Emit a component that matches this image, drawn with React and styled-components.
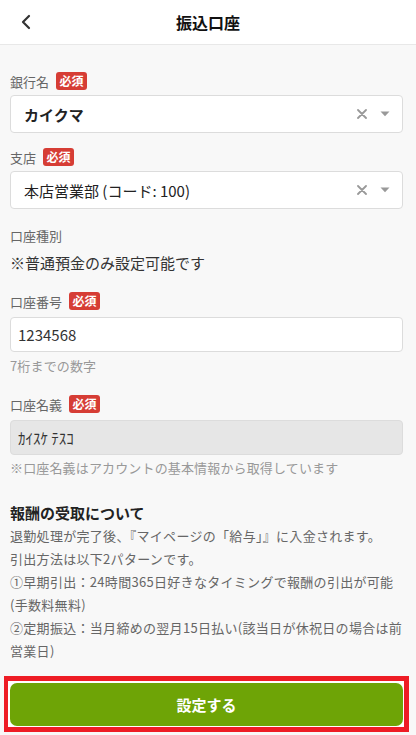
import React from 'react';
import styled, { createGlobalStyle } from 'styled-components';
import { ChevronLeft } from 'lucide-react';

const GlobalStyle = createGlobalStyle`
  body {
    margin: 0;
    background: #f8f8f8;
    font-family: "Noto Sans CJK JP", "Noto Sans", sans-serif;
    color: #333;
  }
`;

const Page = styled.div`
  min-height: 735px;
  background: #f8f8f8;
`;

const Header = styled.header`
  position: relative;
  height: 44px;
  background: #fff;
  border-bottom: 1px solid #e8e8e8;
  display: flex;
  align-items: center;
  justify-content: center;
`;

const BackButton = styled.button`
  position: absolute;
  left: 14px;
  top: 10px;
  padding: 0;
  border: none;
  background: transparent;
  color: #333;
  display: flex;
  cursor: pointer;
`;

const Title = styled.h1`
  margin: 0;
  font-size: 16px;
  font-weight: 700;
  color: #111;
`;

const Content = styled.main`
  padding: 27px 13px 0 10px;
  display: flex;
  flex-direction: column;
`;

const Field = styled.div`
  display: flex;
  flex-direction: column;
  gap: ${({ $gap }) => $gap || 5}px;
  margin-bottom: ${({ $mb }) => $mb || 0}px;
`;

const LabelRow = styled.div`
  display: flex;
  align-items: center;
  gap: 7px;
  height: 18px;
  font-size: 13px;
  color: #666;
`;

const Badge = styled.span`
  display: inline-block;
  height: 18px;
  line-height: 18px;
  padding: 0 3.5px;
  border-radius: 3px;
  background: #d63d35;
  color: #fff;
  font-size: 12px;
  font-weight: 700;
`;

const Select = styled.div`
  height: 38px;
  box-sizing: border-box;
  background: #fff;
  border: 1px solid #dcdcdc;
  border-radius: 4px;
  display: flex;
  align-items: center;
  padding: 0 12px 0 13px;
`;

const SelectValue = styled.span`
  flex: 1;
  font-size: 15px;
  font-weight: ${({ $bold }) => ($bold ? 700 : 400)};
  color: #222;
`;

const Indicators = styled.div`
  display: flex;
  align-items: center;
  gap: 13px;
  color: #999;
`;

const Input = styled.div`
  height: 35px;
  box-sizing: border-box;
  border: 1px solid #dcdcdc;
  border-radius: 4px;
  background: ${({ $disabled }) => ($disabled ? '#e6e6e6' : '#fff')};
  display: flex;
  align-items: center;
  padding: 0 7px;
  font-size: 15px;
  color: #333;
`;

const Note = styled.div`
  font-size: 15px;
  line-height: 24px;
  color: #333;
`;

const Help = styled.div`
  margin-top: ${({ $mt }) => $mt || 0}px;
  font-size: 13px;
  line-height: 18px;
  letter-spacing: 0.15px;
  color: #999;
`;

const InfoTitle = styled.h2`
  margin: 0;
  font-size: 15px;
  line-height: 22px;
  font-weight: 700;
  color: #222;
`;

const InfoText = styled.p`
  margin: 0;
  font-size: 13px;
  line-height: 23px;
  letter-spacing: 0.3px;
  color: #666;
`;

const ButtonFrame = styled.div`
  margin: 14px 7px 0 4px;
  border: 5px solid #ee1c25;
  border-left-width: 4px;
  padding: 2px 1px 1px 2px;
  background: #fff;
`;

const SubmitButton = styled.button`
  display: block;
  width: 100%;
  height: 43px;
  border: none;
  border-radius: 7px;
  background: #6ea406;
  color: #fff;
  font-family: inherit;
  font-size: 15px;
  font-weight: 700;
  cursor: pointer;
`;

const ClearIcon = () => (
  <svg width="10" height="10" viewBox="0 0 10 10">
    <path d="M1 1 L9 9 M9 1 L1 9" stroke="currentColor" strokeWidth="1.8" strokeLinecap="round" />
  </svg>
);

const CaretIcon = () => (
  <svg width="10" height="6" viewBox="0 0 10 6">
    <path d="M0.5 0.5 H9.5 L5 5.2 Z" fill="currentColor" />
  </svg>
);

const Required = ({ children }) => (
  <LabelRow>
    {children}
    <Badge>必須</Badge>
  </LabelRow>
);

export default function App() {
  return (
    <Page>
      <GlobalStyle />
      <Header>
        <BackButton aria-label="戻る">
          <ChevronLeft size={24} strokeWidth={2.2} />
        </BackButton>
        <Title>振込口座</Title>
      </Header>
      <Content>
        <Field $mb={15}>
          <Required>銀行名</Required>
          <Select>
            <SelectValue $bold>カイクマ</SelectValue>
            <Indicators>
              <ClearIcon />
              <CaretIcon />
            </Indicators>
          </Select>
        </Field>
        <Field $mb={17}>
          <Required>支店</Required>
          <Select>
            <SelectValue>本店営業部 (コード: 100)</SelectValue>
            <Indicators>
              <ClearIcon />
              <CaretIcon />
            </Indicators>
          </Select>
        </Field>
        <Field $gap={7} $mb={17}>
          <LabelRow>口座種別</LabelRow>
          <Note>※普通預金のみ設定可能です</Note>
        </Field>
        <Field $gap={7} $mb={20}>
          <Required>口座番号</Required>
          <Input>1234568</Input>
          <Help $mt={-2}>7桁までの数字</Help>
        </Field>
        <Field $gap={7} $mb={25}>
          <Required>口座名義</Required>
          <Input $disabled>ｶｲｽｹ ﾃｽｺ</Input>
          <Help $mt={-3}>※口座名義はアカウントの基本情報から取得しています</Help>
        </Field>
        <InfoTitle>報酬の受取について</InfoTitle>
        <InfoText>
          退勤処理が完了後、『マイページの「給与」』に入金されます。
          <br />
          引出方法は以下2パターンです。
          <br />
          ①早期引出：24時間365日好きなタイミングで報酬の引出が可能(手数料無料)
          <br />
          ②定期振込：当月締めの翌月15日払い(該当日が休祝日の場合は前営業日)
        </InfoText>
      </Content>
      <ButtonFrame>
        <SubmitButton>設定する</SubmitButton>
      </ButtonFrame>
    </Page>
  );
}
